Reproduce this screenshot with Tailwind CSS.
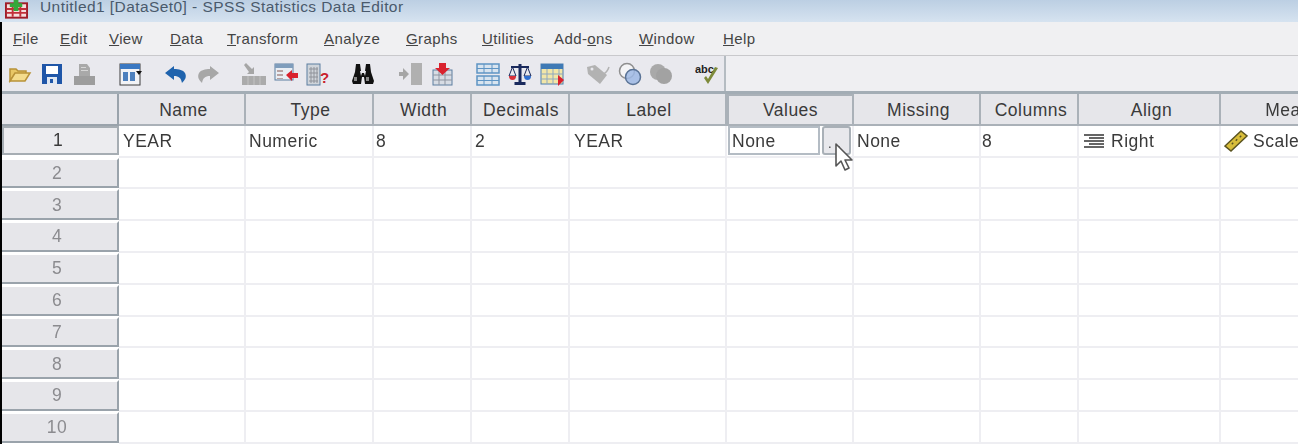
<!DOCTYPE html>
<html lang="en">
<head>
<meta charset="UTF-8">
<title>SPSS Statistics Data Editor</title>
<script src="https://cdn.jsdelivr.net/npm/@tailwindcss/browser@4"></script>
</head>
<body class="w-[1298px] h-[444px] overflow-hidden bg-white font-['Liberation_Sans',sans-serif] text-[#3a3a3a]">
<div class="blur-[0.5px]">
  <!-- title bar -->
  <div class="h-[22px] flex pl-[5px] gap-[12px] bg-gradient-to-b from-[#bccfe3] to-[#d6e3f0] overflow-hidden">
    <svg class="w-[23px] h-[20px]" viewBox="0 0 24 20"><rect x="1" y="3" width="22" height="15" fill="#f6dede" stroke="#a01c28" stroke-width="2"/><path d="M2 9h20M2 13h20M8 4v13M16 4v13" stroke="#c2303a" stroke-width="2"/><path d="M9-1h5v4h4v4h-4v4H9V7H5V3h4z" fill="#35a83a"/></svg>
    <span class="text-[15.5px] leading-[14px] tracking-[0.43px] text-[#4a5a6c]">Untitled1 [DataSet0] - SPSS Statistics Data Editor</span>
  </div>
  <div class="border-l-2 border-black">
    <!-- menu -->
    <div class="h-[34px] flex items-center pl-[11px] pt-[2px] text-[15px] tracking-[0.4px] bg-[#f0f0f2] border-b border-[#c9c9cc] text-[#444]">
      <span class="w-[47px]"><u>F</u>ile</span>
      <span class="w-[49px]"><u>E</u>dit</span>
      <span class="w-[61px]"><u>V</u>iew</span>
      <span class="w-[57px]"><u>D</u>ata</span>
      <span class="w-[97px]"><u>T</u>ransform</span>
      <span class="w-[82px]"><u>A</u>nalyze</span>
      <span class="w-[76px]"><u>G</u>raphs</span>
      <span class="w-[72px]"><u>U</u>tilities</span>
      <span class="w-[85px]">Add-<u>o</u>ns</span>
      <span class="w-[84px]"><u>W</u>indow</span>
      <span><u>H</u>elp</span>
    </div>
    <!-- toolbar -->
    <div class="h-[38px] flex bg-[#efeff2] border-b-[3px] border-[#a3adb5]">
      <div class="w-[724px] border-r-2 border-[#b5bcc2] bg-[#e9e9ee] flex items-center pl-[6px] gap-[22px]">
        <div class="flex gap-2">
          <svg class="w-6 h-6" viewBox="0 0 24 24"><path d="M2 19V7h6l2 2h8v3H7L2 19z" fill="#e8c766" stroke="#b89238" stroke-width="1.5"/><path d="M2 19l5-8h15l-5 8z" fill="#f4dc8c" stroke="#b89238" stroke-width="1.5"/></svg>
          <svg class="w-6 h-6" viewBox="0 0 24 24"><path d="M2 2h20v20H2z" fill="#1f56a8"/><rect x="6" y="4" width="12" height="8" fill="#fff"/><rect x="7" y="15" width="10" height="7" fill="#dfe7f2"/><rect x="10" y="17" width="3" height="4" fill="#1f56a8"/></svg>
          <svg class="w-6 h-6" viewBox="0 0 24 24"><path d="M7 2h8l3 4v8H7z" fill="#a9a9a9"/><path d="M9 5h5v1H9zM9 8h7v1H9z" fill="#d6d6d6"/><path d="M2 14h21v9H2z" fill="#9d9d9d"/></svg>
        </div>
        <svg class="w-6 h-6" viewBox="0 0 24 24"><rect x="2" y="2" width="20" height="21" fill="#f2f3f6" stroke="#3c3c3c"/><rect x="2" y="2" width="20" height="5" fill="#3a78c2"/><path d="M5 10h5v9H5zM12 10h5v9h-5z" fill="#4d80bd"/><path d="M18 9h6l-3 4z" fill="#111"/></svg>
        <div class="flex gap-2">
          <svg class="w-6 h-6" viewBox="0 0 24 24"><path d="M10 4L1 11l9 7v-4c5 0 7 2 8 7 3-3 5-6 3-10-2-3-6-4-11-4z" fill="#1f63ad"/></svg>
          <svg class="w-6 h-6" viewBox="0 0 24 24"><path d="M14 4l9 7-9 7v-4c-5 0-7 2-8 7-3-3-5-6-3-10 2-3 6-4 11-4z" fill="#a7a7a7"/></svg>
        </div>
        <div class="flex gap-2">
          <svg class="w-6 h-6" viewBox="0 0 24 24"><path d="M2 3l2-2 6 6 2-2v7H5l2-2z" fill="#a6a6a6"/><rect y="14" width="24" height="9" fill="#ababab"/><path d="M6 14v9M12 14v9M18 14v9" stroke="#c3c3c3"/></svg>
          <svg class="w-6 h-6" viewBox="0 0 24 24"><rect x="1" y="2" width="18" height="16" fill="#e9eef4" stroke="#5c7ea0"/><rect x="1" y="2" width="18" height="4" fill="#7f9dbc"/><path d="M3 8h6v2H3zM3 12h6v2H3zM3 16h6v1H3z" fill="#b8a2a2"/><path d="M12 13l6-5v3h6v5h-6v3z" fill="#d9222e"/></svg>
          <svg class="w-6 h-6" viewBox="0 0 24 24"><rect x="1" y="2" width="13" height="21" fill="#cfd4da" stroke="#5c7ea0"/><path d="M3 7h9M3 11h9M3 15h9M3 19h9M5 5v16M8 5v16M11 5v16" stroke="#8f9299"/><text x="14" y="21" font-size="15" font-weight="700" fill="#c9202c" font-family="Liberation Sans">?</text></svg>
        </div>
        <div class="flex gap-2 -ml-[1px]">
          <svg class="w-6 h-6" viewBox="0 0 24 24"><path d="M5 2h4l1 7h-1l1 5 1-3h2l1 3 1-5h-1l1-7h4l1 8 3 9-1 3h-8l-1-7h-2l-1 7H2l-1-3 3-9z" fill="#111"/><rect x="3" y="15" width="3" height="4" fill="#888"/><rect x="15" y="15" width="3" height="4" fill="#888"/></svg>
          <svg class="w-6 h-6 ml-[15px]" viewBox="0 0 24 24"><rect x="13" y="1" width="11" height="22" fill="#b0b0b0"/><path d="M1 10h4V6l6 6-6 6v-4H1z" fill="#a6a6a6"/></svg>
          <svg class="w-6 h-6" viewBox="0 0 24 24"><rect x="3" y="8" width="19" height="15" fill="#d7dce4" stroke="#5c7ea0"/><path d="M3 13h19M3 18h19M9 8v15M15 8v15" stroke="#8d94a0"/><path d="M9 1h7v5h4l-7.500 7L5 6h4z" fill="#d9222e"/></svg>
        </div>
        <div class="flex gap-2">
          <svg class="w-6 h-6" viewBox="0 0 24 24"><rect x="1" y="2" width="22" height="9" fill="#d8e4ef" stroke="#5e94c4" stroke-width="1.500"/><rect x="1" y="14" width="22" height="9" fill="#d8e4ef" stroke="#5e94c4" stroke-width="1.500"/><path d="M1 6.500h22M1 18.500h22M8 2v9M16 2v9M8 14v9M16 14v9" stroke="#5e94c4"/></svg>
          <svg class="w-6 h-6" viewBox="0 0 24 24"><path d="M10.500 2h3v18h4v3h-11v-3h4z" fill="#19295c"/><path d="M3 5h18" stroke="#19295c" stroke-width="2"/><path d="M1 14l3.500-9L8 14z" fill="none" stroke="#19295c"/><path d="M16 14l3.500-9 3.500 9z" fill="none" stroke="#19295c"/><path d="M1 14h7a3.500 4 0 0 1-7 0z" fill="#d9303a"/><path d="M16 14h7a3.500 4 0 0 1-7 0z" fill="#2f6fd0"/></svg>
          <svg class="w-6 h-6" viewBox="0 0 24 24"><rect x="1" y="2" width="22" height="20" fill="#f2e6a8" stroke="#4d7fae"/><rect x="1" y="2" width="22" height="5" fill="#3f7ab5"/><path d="M1 12h22M1 17h22M7 7v15M13 7v15M19 7v15" stroke="#8fa8bf"/><path d="M18 13l6 5-6 6z" fill="#d9222e"/></svg>
        </div>
        <div class="flex gap-2">
          <svg class="w-6 h-6" viewBox="0 0 24 24"><path d="M1 5l8-2 12 10-7 9L2 12z" fill="#b2b2b2"/><circle cx="6" cy="7" r="1.500" fill="#e9e9ee"/><path d="M17 12c3-1 5-4 6-7" fill="none" stroke="#b2b2b2" stroke-width="1.500"/></svg>
          <svg class="w-6 h-6" viewBox="0 0 24 24"><circle cx="9" cy="9" r="7.500" fill="#f4f4f6" stroke="#8f8f8f" stroke-width="1.500"/><circle cx="15" cy="15" r="7.500" fill="#9db9e4" fill-opacity=".85" stroke="#5a7396" stroke-width="1.500"/></svg>
          <svg class="w-6 h-6 -ml-[1px]" viewBox="0 0 24 24"><circle cx="9" cy="10" r="8" fill="#a9a9a9"/><circle cx="15" cy="14" r="8" fill="#a2a2a2"/></svg>
        </div>
        <svg class="w-6 h-6" viewBox="0 0 24 24"><text x="0" y="11" font-size="11" font-weight="700" fill="#222" font-family="Liberation Sans">abc</text><path d="M9 16l4 6 10-16-3-1-7 12-2-3z" fill="#7d8a3a"/></svg>
      </div>
    </div>
    <!-- grid -->
    <div id="sheet" class="grid grid-cols-[117px_127px_128px_98px_98px_157px_127px_127px_98px_142px_160px] auto-rows-[31.8px] text-[17.5px] tracking-[0.5px]">
      <div class="bg-[#e6e6ea] border-r-2 border-b-2 border-[#9aa3ab]"></div>
      <div class="bg-[#e6e6ea] border-r-2 border-b-2 border-[#aab1b8] pl-[4px] pt-[2px] flex items-center justify-center">Name</div>
      <div class="bg-[#e6e6ea] border-r-2 border-b-2 border-[#aab1b8] pl-[3px] pt-[2px] flex items-center justify-center">Type</div>
      <div class="bg-[#e6e6ea] border-r-2 border-b-2 border-[#aab1b8] pl-[3px] pt-[2px] flex items-center justify-center">Width</div>
      <div class="bg-[#e6e6ea] border-r-2 border-b-2 border-[#aab1b8] pl-[2px] pt-[2px] flex items-center justify-center">Decimals</div>
      <div class="bg-[#e6e6ea] border-r-2 border-b-2 border-[#aab1b8] pl-[3px] pt-[2px] flex items-center justify-center">Label</div>
      <div class="bg-[#e6e6ea] border-2 border-[#aab1b8] flex items-center justify-center">Values</div>
      <div class="bg-[#e6e6ea] border-r-2 border-b-2 border-[#aab1b8] pl-[4px] pt-[2px] flex items-center justify-center">Missing</div>
      <div class="bg-[#e6e6ea] border-r-2 border-b-2 border-[#aab1b8] pl-[4px] pt-[2px] flex items-center justify-center">Columns</div>
      <div class="bg-[#e6e6ea] border-r-2 border-b-2 border-[#aab1b8] pl-[5px] pt-[2px] flex items-center justify-center">Align</div>
      <div class="bg-[#e6e6ea] border-b-2 border-[#aab1b8] pt-[2px] flex items-center justify-center whitespace-nowrap overflow-hidden">Measure</div>

      <div class="bg-[#ececef] border-2 border-[#a6adb3] mb-[3px] pr-[5px] flex items-center justify-center">1</div>
      <div class="border-r-2 border-b-2 border-[#eeeef2] pl-[4px] flex items-center">YEAR</div>
      <div class="border-r-2 border-b-2 border-[#eeeef2] pl-[3px] flex items-center">Numeric</div>
      <div class="border-r-2 border-b-2 border-[#eeeef2] pl-[2px] flex items-center">8</div>
      <div class="border-r-2 border-b-2 border-[#eeeef2] pl-[3px] flex items-center">2</div>
      <div class="border-r-2 border-b-2 border-[#eeeef2] pl-[4px] flex items-center">YEAR</div>
      <div class="border-r-2 border-b-2 border-[#eeeef2] flex items-center pl-[1px] gap-[2px]">
        <div class="w-[92px] h-[29px] border-2 border-[#b4bcc4] pl-[2px] flex items-center">None</div>
        <div class="w-[29px] h-[29px] border-2 border-[#a9b0b7] rounded-[3px] bg-[#e8e8ec] flex items-end justify-center text-[13px] leading-[18px] tracking-[6px] pl-[2px]">..</div>
      </div>
      <div class="border-r-2 border-b-2 border-[#eeeef2] pl-[3px] flex items-center">None</div>
      <div class="border-r-2 border-b-2 border-[#eeeef2] pl-[1px] flex items-center">8</div>
      <div class="border-r-2 border-b-2 border-[#eeeef2] pl-[4px] gap-[6px] flex items-center">
        <svg class="w-[22px] h-[16px]" viewBox="0 0 22 16"><path d="M1 2h20M6 5h15M1 8h20M6 11h15M1 14h20" stroke="#333" stroke-width="1.500"/></svg>Right
      </div>
      <div class="border-b-2 border-[#eeeef2] pl-[3px] gap-[5px] flex items-center whitespace-nowrap overflow-hidden">
        <svg class="w-[24px] h-[22px] shrink-0" viewBox="0 0 24 22"><path d="M17 1l6 5L7 21l-6-5z" fill="#d8bd3a" stroke="#5a5320" stroke-width="1.500"/><path d="M16 6l1 1M12 9.500l1 1M8 13l1 1" stroke="#5a5320" stroke-width="2"/></svg>Scale
      </div>
    </div>
  </div>
</div>
<!-- mouse pointer -->
<svg class="absolute left-[833px] top-[142px] w-[22px] h-[31px]" viewBox="0 0 22 31"><path d="M3 2v22l5-5 4 9 4-2-4-8h7z" fill="#fff" stroke="#555" stroke-width="1.600" stroke-linejoin="round"/></svg>
<script>
  const sheet = document.getElementById('sheet');
  const blanks = [0, 1, 2, 3, 4, 5, 6, 7, 8].map(() => '<div class="border-r-2 border-b-2 border-[#eeeef2]"></div>').join('');
  for (let n = 2; n <= 10; n++) {
    sheet.insertAdjacentHTML('beforeend',
      `<div class="bg-[#e6e6ea] border-r-2 border-b-2 border-[#9aa3ab] border-t-2 border-t-white mb-[1px] pr-[5px] flex items-center justify-center text-[#8b8b8f]">${n}</div>` +
      blanks + '<div class="border-b-2 border-[#eeeef2]"></div>');
  }
</script>
</body>
</html>
